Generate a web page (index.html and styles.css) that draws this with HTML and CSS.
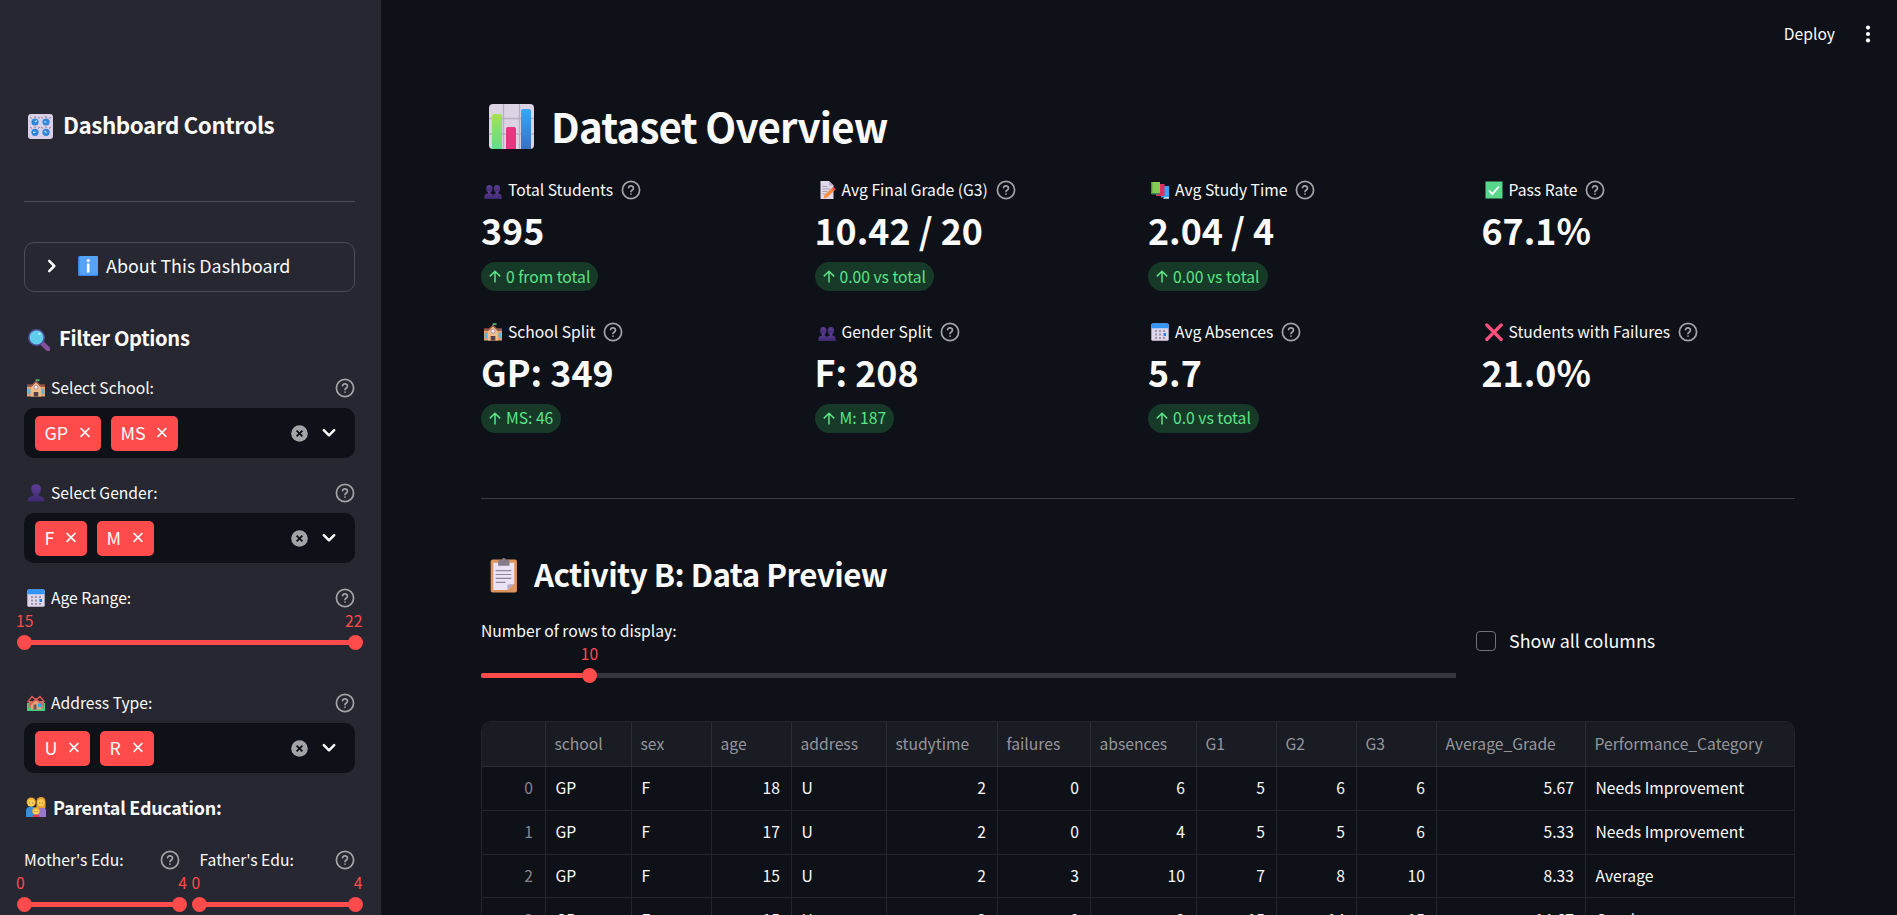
FILE: index.html
```html
<!DOCTYPE html>
<html lang="en">
<head>
<meta charset="utf-8">
<title>Student Dashboard</title>
<link rel="stylesheet" href="styles.css">
</head>
<body>
<svg class="defs" aria-hidden="true">
  <symbol id="help" viewBox="0 0 20 20"><g fill="none" stroke="currentColor" stroke-width="1.7" stroke-linecap="round" stroke-linejoin="round"><circle cx="10" cy="10" r="8.6"/><path d="M7.6 7.6a2.45 2.45 0 0 1 4.8.8c0 1.6-2.4 2-2.4 3.2M10 14v.1"/></g></symbol>
  <symbol id="x" viewBox="0 0 12 12"><path d="M1.600 2l8.800 8.800M10.400 2l-8.800 8.800" fill="none" stroke="currentColor" stroke-width="1.700"/></symbol>
  <symbol id="clear" viewBox="0 0 17 17"><circle cx="8.5" cy="8.5" r="8.3" fill="#a3a4a7"/><path d="M5.6 5.6l5.8 5.8M11.4 5.6l-5.8 5.8" fill="none" stroke="#0e1117" stroke-width="1.8"/></symbol>
  <symbol id="down" viewBox="0 0 14 10"><path d="M1.8 2.2L7 7.3l5.2-5.1" fill="none" stroke="currentColor" stroke-width="2.5" stroke-linecap="round" stroke-linejoin="round"/></symbol>
  <symbol id="up" viewBox="0 0 12 13"><path d="M6 12.5V1.3M.8 6.4L6 1.2l5.2 5.2" fill="none" stroke="currentColor" stroke-width="1.5"/></symbol>
  <symbol id="knobs" viewBox="0 0 25 25"><rect width="25" height="25" rx="3" fill="#d9cfe9"/><g stroke="#6d6878" stroke-width=".9"><path d="M7 4V2M3.500 4.500L2.500 3M10.500 4.500l1-1.500M18 4V2M14.500 4.500l-1-1.500M21.500 4.500l1-1.500M7 14v-1.500M3.500 14.500l-1-1.500M10.500 14.500l1-1.500M18 14v-1.500M14.500 14.500l-1-1.500M21.500 14.500l1-1.500"/></g><g fill="#2f86d8"><circle cx="7" cy="8" r="3.600"/><circle cx="18" cy="8" r="3.600"/><circle cx="7" cy="18.300" r="3.600"/><circle cx="18" cy="18.300" r="3.600"/></g><path d="M7 8l2-1.500M16 8h2.500M5 18.300h2.500M16.500 16.800l2 2" stroke="#bfe6ff" stroke-width="1.200"/></symbol>
  <linearGradient id="gBlue" x1="0" y1="0" x2="0" y2="1"><stop offset="0" stop-color="#37a8f2"/><stop offset="1" stop-color="#3b70c4"/></linearGradient>
  <linearGradient id="gGreen" x1="0" y1="0" x2="0" y2="1"><stop offset="0" stop-color="#a9e052"/><stop offset="1" stop-color="#5fdc8e"/></linearGradient>
  <linearGradient id="gPurp" x1="0" y1="0" x2="0" y2="1"><stop offset="0" stop-color="#5f3d96"/><stop offset="1" stop-color="#3d2a70"/></linearGradient>
  <symbol id="info" viewBox="0 0 20 20"><rect width="20" height="20" rx="1.500" fill="#3f86e0"/><rect x="1.500" width="18.500" height="18.800" rx="1" fill="#55a3f8"/><path d="M10.200 7.500v9" stroke="#fff" stroke-width="2.600"/><circle cx="10.200" cy="4.500" r="1.600" fill="#fff"/></symbol>
  <symbol id="search" viewBox="0 0 22 22"><path d="M14 14l6 6" stroke="#83509b" stroke-width="4.600" stroke-linecap="round"/><circle cx="8.500" cy="8.500" r="7.700" fill="#5fcdec" stroke="#50509c" stroke-width="1.500"/><circle cx="11.500" cy="4.700" r="1.300" fill="#b6f0ff"/></symbol>
  <symbol id="school" viewBox="0 0 18 18"><path d="M0 7h18v10.500H0z" fill="#dfa071"/><path d="M0 5.300h5v2.500H0zM13 5.300h5v2.500h-5z" fill="#8c4f46"/><path d="M4 8l5-5 5 5v9.500H4z" fill="#f0bd88"/><path d="M3.500 7.700L9 2.600l5.500 5.100" stroke="#a35a4b" stroke-width="1.300" fill="none"/><path d="M9 3V.3" stroke="#8a6b60"/><path d="M9 .2h3.500v2H9z" fill="#43b569"/><circle cx="9" cy="8.200" r="2" fill="#f3eaf8" stroke="#8b7692" stroke-width=".7"/><path d="M.8 10h2.600v5H.8zM14.600 10h2.600v5h-2.600z" fill="#57b9e0"/><path d="M6.700 13h4.600v4.500H6.700z" fill="#51404c"/></symbol>
  <symbol id="person" viewBox="0 0 18 18"><path d="M.5 17.500c0-3.500 2-5 5-5.500l1-.5V10C5 9 4.300 7 4.300 4.500 4.300 1.500 6 .2 9 .2s5 1.500 5 4.800C14 7.500 13 9.500 11.500 10.500v1l1 .5c3 .5 5 2 5 5.500z" fill="url(#gPurp)"/></symbol>
  <symbol id="people" viewBox="0 0 18 18"><g fill="url(#gPurp)"><ellipse cx="5.300" cy="7.800" rx="3.200" ry="3.900"/><ellipse cx="12.900" cy="7.800" rx="3.200" ry="3.900"/><path d="M.3 18c0-4 .7-5 3.700-5.400V10h2.600v2.600c2.400.4 2.600 1.400 2.600 5.400zM9 18c0-4 .2-5 2.700-5.400V10h2.600v2.600c2.700.4 3.500 1.400 3.500 5.400z"/></g></symbol>
  <symbol id="cal" viewBox="0 0 18 18"><rect x=".3" y=".5" width="17.400" height="17.300" rx="1.500" fill="#dfd6ec"/><path d="M.3 5.200V2q0-1.700 1.700-1.700h14q1.700 0 1.700 1.700v3.200z" fill="#3395f5"/><g fill="#9a97a8"><path d="M4 7h2v2H4zM8 7h2v2H8zM12 7h2v2h-2zM4 10.500h2v2H4zM8 10.500h2v2H8zM4 14h2v2H4zM8 14h2v2H8zM12 14h2v2h-2z"/></g><path d="M12.500 10h2.500v3h-2.500z" fill="#2880e8"/></symbol>
  <symbol id="houses" viewBox="0 0 18 18"><path d="M0 9h18v8H0z" fill="#41cd83"/><path d="M1.500 7h6v7h-6zM11 7h6v7h-6z" fill="#bd7a66"/><path d="M4 10l5-5 5.500 5v5.500H4z" fill="#e5a277"/><path d="M.5 8L5 2.500 9 6l4-3.500L17.500 8M3 11l6-6 6.500 6" stroke="#dc5956" stroke-width="1.500" fill="none"/><path d="M6.500 10.500h3v5h-3z" fill="#765262"/><path d="M11 9.500h3.500v3.500H11z" fill="#35a9ef"/></symbol>
  <symbol id="family" viewBox="0 0 20 20"><path d="M0 20v-6q0-4.500 5-4.500t5 4.500v6z" fill="#3490dc"/><path d="M10 20v-6q0-4.500 5-4.500t5 4.500v6z" fill="#9677cb"/><path d="M10.500 11V4.500a4.500 4.500 0 0 1 9 0V11z" fill="#e7a132"/><circle cx="5.200" cy="5" r="4.600" fill="#f2ac2f"/><circle cx="5.200" cy="6" r="3.600" fill="#ffd052"/><circle cx="15" cy="5.800" r="3.500" fill="#ffca50"/><circle cx="10" cy="14" r="3.800" fill="#efad35"/><circle cx="10" cy="14.600" r="2.700" fill="#ffd35c"/><path d="M6.500 20q0-2.500 3.500-2.500t3.500 2.500z" fill="#e63b52"/><path d="M3.700 5.500v1M6.700 5.500v1M13.700 5.500v1M16.500 5.500v1M9 14v.8M11 14v.8" stroke="#6d4339" stroke-width=".8"/></symbol>
  <symbol id="chart" viewBox="0 0 45 45"><rect width="45" height="45" rx="4" fill="#dcd3e5"/><path d="M14.500 0v45M30.500 0v45M0 14.500h45M0 30h45" stroke="#b9afc4" stroke-width="1.300"/><path d="M3 45V12q0-2 2-2h6q2 0 2 2v33z" fill="url(#gGreen)"/><path d="M17 45V25q0-2 2-2h6q2 0 2 2v20z" fill="#e5367f"/><path d="M32 45V7q0-2 2-2h6q2 0 2 2v38z" fill="url(#gBlue)"/></symbol>
  <symbol id="memo" viewBox="0 0 18 18"><path d="M2.500 0H11l4.500 4.500V18h-13z" fill="#e1d8ea"/><path d="M11 0l4.500 4.500H11z" fill="#b9aec8"/><path d="M4.500 5.500h5M4.500 8h8M4.500 10.500h5M4.500 13h3" stroke="#a79fb0"/><path d="M6.500 14L14 7l2.500 2.500L9 16.500l-3.300.8z" fill="#f78a3b"/><path d="M13.700 7.200l1.700-1.500 2.500 2.500-1.600 1.600z" fill="#ee4b5c"/></symbol>
  <symbol id="books" viewBox="0 0 18 18"><path d="M10 5h8v11.500h-8z" fill="#37a6f2"/><path d="M13.500 16h4.500v1.800h-6z" fill="#c0e6ff"/><path d="M5 3h8.500v12H5z" fill="#df2e64"/><path d="M0 1h9v11.800H0z" fill="#83cc55"/><path d="M0 12h9v1.500H1z" fill="#3c8755"/><path d="M0 1h1.300v12H0z" fill="#47914e"/></symbol>
  <symbol id="check" viewBox="0 0 18 18"><rect x=".5" y=".5" width="17" height="17" fill="#59d78d"/><path d="M4 9.500l3.300 3.700L14 5.500" fill="none" stroke="#fff" stroke-width="1.800"/></symbol>
  <symbol id="cross" viewBox="0 0 18 18"><path d="M1.800 2l14.400 14.500M16.200 2L1.800 16.500" stroke="#f9507f" stroke-width="3.200" stroke-linecap="round"/></symbol>
  <symbol id="clip" viewBox="0 0 28 36"><rect x=".3" y="1.500" width="27" height="34" rx="2" fill="#dd955f"/><path d="M3 5h21.500v21.500L17.500 33H3z" fill="#ebe2f5"/><path d="M24.500 26.500L17.500 33v-5.500z" fill="#b9a9cf"/><path d="M8 7V3.500q0-1.500 1.500-1.500h2.200q0-2 2.100-2t2.100 2h2.200q1.500 0 1.500 1.500V8H8z" fill="#867b89"/><path d="M5.500 13h16M5.500 17h16M5.500 21h16M5.500 25h10" stroke="#8f8799" stroke-width="1.200"/></symbol>
</svg>
<div class="app">
  <aside class="side">
    <h2 class="side-title"><svg class="i25"><use href="#knobs"/></svg><span>Dashboard Controls</span></h2>
    <hr class="side-rule">
    <div class="expander"><svg class="chev"><use href="#down"/></svg><svg class="i20"><use href="#info"/></svg><span>About This Dashboard</span></div>
    <h3 class="side-sub"><svg class="i22"><use href="#search"/></svg><span>Filter Options</span></h3>

    <div class="field">
      <div class="label"><svg class="i18"><use href="#school"/></svg>Select School:<svg class="help"><use href="#help"/></svg></div>
      <div class="select"><span class="tag w66">GP<svg><use href="#x"/></svg></span><span class="tag w67">MS<svg><use href="#x"/></svg></span><svg class="clear"><use href="#clear"/></svg><svg class="down"><use href="#down"/></svg></div>
    </div>
    <div class="field">
      <div class="label"><svg class="i18"><use href="#person"/></svg>Select Gender:<svg class="help"><use href="#help"/></svg></div>
      <div class="select"><span class="tag w52">F<svg><use href="#x"/></svg></span><span class="tag w57">M<svg><use href="#x"/></svg></span><svg class="clear"><use href="#clear"/></svg><svg class="down"><use href="#down"/></svg></div>
    </div>
    <div class="field">
      <div class="label"><svg class="i18"><use href="#cal"/></svg>Age Range:<svg class="help"><use href="#help"/></svg></div>
      <div class="range"><div class="nums"><span>15</span><span>22</span></div><div class="bar"><i></i><i></i></div></div>
    </div>
    <div class="field">
      <div class="label"><svg class="i18"><use href="#houses"/></svg>Address Type:<svg class="help"><use href="#help"/></svg></div>
      <div class="select"><span class="tag w55">U<svg><use href="#x"/></svg></span><span class="tag w54">R<svg><use href="#x"/></svg></span><svg class="clear"><use href="#clear"/></svg><svg class="down"><use href="#down"/></svg></div>
    </div>
    <p class="parental"><svg class="i20"><use href="#family"/></svg>Parental Education:</p>
    <div class="pair">
      <div><div class="label">Mother's Edu:<svg class="help"><use href="#help"/></svg></div><div class="range"><div class="nums"><span>0</span><span>4</span></div><div class="bar"><i></i><i></i></div></div></div>
      <div><div class="label">Father's Edu:<svg class="help"><use href="#help"/></svg></div><div class="range"><div class="nums"><span>0</span><span>4</span></div><div class="bar"><i></i><i></i></div></div></div>
    </div>
  </aside>

  <main class="main">
    <header class="top"><span>Deploy</span><svg class="dots" viewBox="0 0 6 18"><g fill="#fafafa"><circle cx="3" cy="2.600" r="2.100"/><circle cx="3" cy="9" r="2.100"/><circle cx="3" cy="15.400" r="2.100"/></g></svg></header>
    <div class="content">
      <h1 class="h1"><svg class="i45"><use href="#chart"/></svg><span>Dataset Overview</span></h1>
      <section class="metrics">
        <div class="metric"><div class="mlabel"><svg class="i18"><use href="#people"/></svg>Total Students<svg class="help"><use href="#help"/></svg></div><div class="value">395</div><div class="delta"><svg><use href="#up"/></svg>0 from total</div></div>
        <div class="metric"><div class="mlabel"><svg class="i18"><use href="#memo"/></svg>Avg Final Grade (G3)<svg class="help"><use href="#help"/></svg></div><div class="value">10.42 / 20</div><div class="delta"><svg><use href="#up"/></svg>0.00 vs total</div></div>
        <div class="metric"><div class="mlabel"><svg class="i18"><use href="#books"/></svg>Avg Study Time<svg class="help"><use href="#help"/></svg></div><div class="value">2.04 / 4</div><div class="delta"><svg><use href="#up"/></svg>0.00 vs total</div></div>
        <div class="metric"><div class="mlabel"><svg class="i18"><use href="#check"/></svg>Pass Rate<svg class="help"><use href="#help"/></svg></div><div class="value">67.1%</div></div>
        <div class="metric"><div class="mlabel"><svg class="i18"><use href="#school"/></svg>School Split<svg class="help"><use href="#help"/></svg></div><div class="value">GP: 349</div><div class="delta"><svg><use href="#up"/></svg>MS: 46</div></div>
        <div class="metric"><div class="mlabel"><svg class="i18"><use href="#people"/></svg>Gender Split<svg class="help"><use href="#help"/></svg></div><div class="value">F: 208</div><div class="delta"><svg><use href="#up"/></svg>M: 187</div></div>
        <div class="metric"><div class="mlabel"><svg class="i18"><use href="#cal"/></svg>Avg Absences<svg class="help"><use href="#help"/></svg></div><div class="value">5.7</div><div class="delta"><svg><use href="#up"/></svg>0.0 vs total</div></div>
        <div class="metric"><div class="mlabel"><svg class="i18"><use href="#cross"/></svg>Students with Failures<svg class="help"><use href="#help"/></svg></div><div class="value">21.0%</div></div>
      </section>
      <hr class="rule">
      <h2 class="h2"><svg class="clip"><use href="#clip"/></svg><span>Activity B: Data Preview</span></h2>
      <div class="controls">
        <div class="rows"><div class="label">Number of rows to display:</div><div class="ten">10</div><div class="track"><div class="fill"></div><i></i></div></div>
        <div class="checkline"><div class="box"></div><span>Show all columns</span></div>
      </div>
      <div class="tablewrap">
        <table>
          <colgroup><col class="c0"><col class="c1"><col class="c2"><col class="c2"><col class="c4"><col class="c5"><col class="c6"><col class="c7"><col class="c2"><col class="c2"><col class="c2"><col class="c11"><col class="c12"></colgroup>
          <thead><tr><th></th><th>school</th><th>sex</th><th>age</th><th>address</th><th>studytime</th><th>failures</th><th>absences</th><th>G1</th><th>G2</th><th>G3</th><th>Average_Grade</th><th>Performance_Category</th></tr></thead>
          <tbody>
            <tr><td class="n idx">0</td><td>GP</td><td>F</td><td class="n">18</td><td>U</td><td class="n">2</td><td class="n">0</td><td class="n">6</td><td class="n">5</td><td class="n">6</td><td class="n">6</td><td class="n">5.67</td><td>Needs Improvement</td></tr>
            <tr><td class="n idx">1</td><td>GP</td><td>F</td><td class="n">17</td><td>U</td><td class="n">2</td><td class="n">0</td><td class="n">4</td><td class="n">5</td><td class="n">5</td><td class="n">6</td><td class="n">5.33</td><td>Needs Improvement</td></tr>
            <tr><td class="n idx">2</td><td>GP</td><td>F</td><td class="n">15</td><td>U</td><td class="n">2</td><td class="n">3</td><td class="n">10</td><td class="n">7</td><td class="n">8</td><td class="n">10</td><td class="n">8.33</td><td>Average</td></tr>
            <tr><td class="n idx">3</td><td>GP</td><td>F</td><td class="n">15</td><td>U</td><td class="n">3</td><td class="n">0</td><td class="n">2</td><td class="n">15</td><td class="n">14</td><td class="n">15</td><td class="n">14.67</td><td>Good</td></tr>
          </tbody>
        </table>
      </div>
    </div>
  </main>
</div>
</body>
</html>
```
FILE: styles.css
```css
* { box-sizing: border-box; }
body { margin: 0; background: #0e1117; color: #fafafa; font: 17.9px/30px "Noto Sans CJK SC", "Source Sans Pro", sans-serif; overflow: hidden; }
h1, h2, h3, p { margin: 0; }
svg { display: block; flex: none; }
.defs { position: absolute; width: 0; height: 0; }
.app { display: flex; height: 915px; overflow: hidden; }
.side { width: 381px; flex: none; background: #262730; padding: 105px 26px 0 24px; overflow: hidden; }
.i18 { width: 18px; height: 18px; margin: 0 6px 0 3px; }
.i20 { width: 20px; height: 20px; }
.i22 { width: 22px; height: 22px; margin-right: 9px; }
.i25 { width: 25px; height: 25px; margin-right: 10px; }
.i45 { width: 45px; height: 45px; margin-right: 17px; }
.help { width: 20px; height: 20px; color: #a3a4a8; }

.side-title { display: flex; align-items: center; height: 42px; padding-left: 4px; font-size: 22.4px; font-weight: 600; letter-spacing: -.44px; }
.side-title span, .side-sub span { padding-bottom: 4px; }
.side-rule { margin: 54px 0 40px; border: 0; border-top: 1px solid #4c4d55; }
.expander { display: flex; align-items: center; height: 50px; border: 1px solid #4b4c55; border-radius: 10px; padding: 0 0 2px 20px; }
.chev { width: 14px; height: 10px; transform: rotate(-90deg); margin-right: 19px; }
.expander span { margin-left: 8px; padding-bottom: 2px; }
.side-sub { display: flex; align-items: center; height: 36px; margin-top: 30px; padding-left: 4px; font-size: 20.15px; font-weight: 600; letter-spacing: -.35px; }
.field { height: 105px; }
.side-sub + .field { margin-top: 17px; }
.label { display: flex; align-items: center; height: 26px; font-size: 15.67px; }
.label .help { margin-left: auto; }
.select { display: flex; align-items: center; height: 50px; margin-top: 7px; background: #0e1117; border-radius: 10px; padding: 0 19px 0 11px; }
.tag { display: flex; align-items: center; justify-content: space-between; height: 35px; padding: 0 10px 2px 9.5px; margin-right: 10px; background: #ff4b4b; border-radius: 5px; line-height: 33px; }
.tag svg { width: 12px; height: 12px; }
.w66 { width: 66px; } .w67 { width: 67px; } .w52 { width: 52px; } .w57 { width: 57px; } .w55 { width: 55px; } .w54 { width: 54px; }
.clear { width: 17px; height: 17px; margin-left: auto; margin-right: 14.5px; }
.down { width: 14px; height: 10px; }
.nums { display: flex; justify-content: space-between; margin: 0 -7.5px 0 -8px; height: 19px; line-height: 19px; font-size: 15.67px; color: #ff4b4b; }
.bar { display: flex; justify-content: space-between; align-items: center; margin: 5px -7.5px 0; height: 15px; background: linear-gradient(#ff4b4b, #ff4b4b) center / calc(100% - 15px) 5px no-repeat; }
.bar i { width: 15px; height: 15px; border-radius: 50%; background: #ff4b4b; }
.parental { display: flex; align-items: center; height: 30px; padding-left: 2px; margin-top: -3px; font-weight: 600; letter-spacing: -.25px; }
.parental svg { margin-right: 7px; }
.pair { display: grid; grid-template-columns: 1fr 1fr; gap: 20px; margin-top: 25px; }

.main { flex: 1; min-width: 0; }
.top { display: flex; align-items: center; justify-content: flex-end; height: 68px; padding-right: 26px; font-size: 15.67px; }
.dots { width: 6px; height: 18px; margin-left: 30px; }
.content { width: 1314px; margin-left: 100px; }
.h1 { display: flex; align-items: center; height: 62px; margin-top: 26px; padding-left: 8px; padding-top: 2px; font-size: 40.2px; font-weight: 600; letter-spacing: -.75px; }
.metrics { display: grid; grid-template-columns: repeat(4, 1fr); column-gap: 20px; grid-auto-rows: 141.5px; margin-top: 21px; }
.mlabel { display: flex; align-items: center; height: 26px; font-size: 15.67px; }
.mlabel .help { margin-left: 8px; }
.value { height: 57px; line-height: 53px; font-size: 35.8px; font-weight: 700; }
.delta { display: inline-flex; align-items: center; height: 29px; border-radius: 15px; background: #173928; color: #5ce488; padding: 0 8px; font-size: 15.67px; }
.delta svg { width: 12px; height: 13px; margin-right: 5px; }
.rule { margin: 38px 0 0; border: 0; border-top: 1px solid #393b40; }
.h2 { display: flex; align-items: center; height: 50px; margin-top: 51px; padding-left: 9px; font-size: 31.3px; font-weight: 600; letter-spacing: -.55px; }
.h2 span { padding-bottom: 3px; }
.clip { width: 28px; height: 35px; margin-right: 16px; }
.controls { display: flex; margin-top: 18px; }
.rows { width: 975px; }
.ten { width: 217px; text-align: center; color: #ff4b4b; font-size: 15.67px; line-height: 20px; height: 20px; }
.track { display: flex; align-items: center; height: 15px; margin-top: 4px; background: linear-gradient(#35373f, #35373f) center / 100% 5px no-repeat; }
.fill { width: 101px; height: 5px; border-radius: 3px 0 0 3px; background: #ff4b4b; }
.track i { width: 15px; height: 15px; border-radius: 50%; background: #ff4b4b; }
.checkline { display: flex; align-items: center; height: 30px; margin: 8px 0 0 20px; }
.checkline span { padding-bottom: 3px; }
.box { width: 20px; height: 20px; border: 1px solid #70727a; border-radius: 4px; margin-right: 13px; }
.tablewrap { margin-top: 38px; height: 240px; overflow: hidden; border: 1px solid #23252b; border-bottom: 0; border-radius: 10px 10px 0 0; }
table { table-layout: fixed; width: 1312px; border-collapse: separate; border-spacing: 0; font-size: 15.67px; }
th, td { height: 43.75px; padding: 0 9.5px; line-height: 24px; text-align: left; font-weight: 400; white-space: nowrap; border-right: 1px solid #23252b; border-bottom: 1px solid #23252b; }
th { height: 45px; padding: 0 8.5px; background: #1a1c24; color: #95969b; border-color: #2b2d34; }
th:last-child, td:last-child { border-right: 0; }
.n { text-align: right; padding-right: 11px; }
.idx { color: #85868b; padding-right: 12px; }
.c0 { width: 64px; } .c1 { width: 86px; } .c2 { width: 80px; } .c4 { width: 95px; } .c5 { width: 111px; } .c6 { width: 93px; } .c7 { width: 106px; } .c11 { width: 149px; } .c12 { width: 208px; }
```
